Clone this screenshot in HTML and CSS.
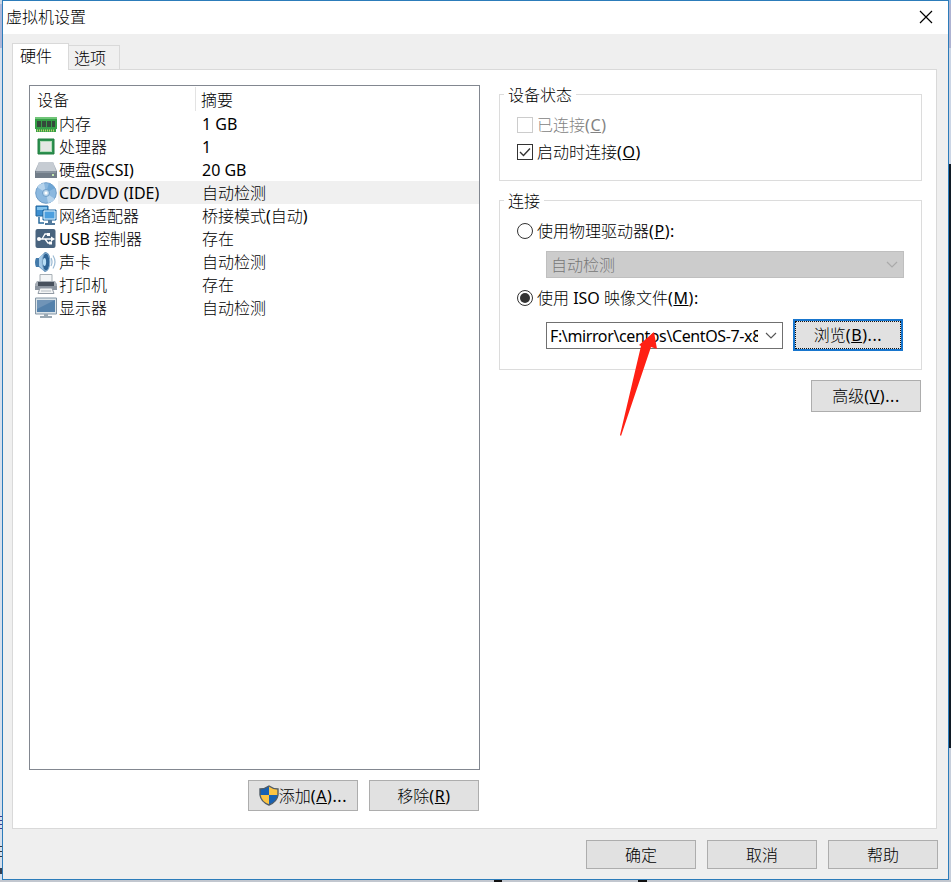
FILE: index.html
```html
<!DOCTYPE html>
<html lang="zh-CN">
<head>
<meta charset="utf-8">
<title>虚拟机设置</title>
<link rel="stylesheet" href="styles.css">
</head>
<body>
<div class="desktop">
<div class="edge edge-left"><i class="scrap s1"></i><i class="scrap s2"></i><i class="scrap s3"></i></div>
<main class="window">
  <header class="titlebar"><span>虚拟机设置</span>
    <svg class="close" width="14" height="14" viewBox="0 0 14 14"><path d="M1 1L13 13M13 1L1 13" stroke="#000" stroke-width="1.2"/></svg>
  </header>
  <nav class="tabs"><div class="tab active">硬件</div><div class="tab">选项</div></nav>
  <section class="panel">
    <div class="left">
      <div class="list">
        <div class="row head"><span class="name">设备</span><span class="sum">摘要</span></div>
        <div class="row"><svg class="ico" viewBox="0 0 22 22"><path d="M0 4H22V16H21V19H1V16H0Z" fill="#35a047"/><path d="M0 4H22V6H0Z" fill="#70c578"/><path d="M2 8h4v6H2zM7 8h4v6H7zM12 8h4v6h-4zM17 8h3v6h-3z" fill="#344a3b"/><path d="M2 17.5H20" stroke="#bfcf71" stroke-width="2" stroke-dasharray="1 1"/></svg><span class="name">内存</span><span class="sum">1 GB</span></div>
        <div class="row"><svg class="ico" viewBox="0 0 22 22"><path d="M3 3H19V18H3Z" fill="#2c9250" stroke="#207c3f"/><path d="M5 5H17V16H5Z" fill="#b5dcbb"/><path d="M6 6H16V15H6Z" fill="#e4e8e4"/></svg><span class="name">处理器</span><span class="sum">1</span></div>
        <div class="row"><svg class="ico" viewBox="0 0 22 22"><path d="M4 3H18L22 12V19H0V12Z" fill="#a6afb9"/><path d="M4 3H18L21 12H1Z" fill="#c6ccd3"/><path d="M0 12H22V19H0Z" fill="#727d89"/><path d="M1 13H21" stroke="#a0abb5"/><path d="M17 15h2v2h-2z" fill="#c6eab1"/></svg><span class="name">硬盘(SCSI)</span><span class="sum">20 GB</span></div>
        <div class="row selected"><svg class="ico" viewBox="0 0 22 22"><circle cx="11" cy="11" r="10.3" fill="#8bb8df" stroke="#6e9cc7"/><path d="M11 11L2 5A11 11 0 0 1 9 1ZM11 11L20 17A11 11 0 0 1 13 21Z" fill="#b5d3ec"/><path d="M11 11L14 1A11 11 0 0 1 20 6Z" fill="#6ea5d4"/><circle cx="11" cy="11" r="3.5" fill="#bdd8ed" stroke="#6d9dc8"/><circle cx="11" cy="11" r="1.5" fill="#fff"/></svg><span class="name">CD/DVD (IDE)</span><span class="sum">自动检测</span></div>
        <div class="row"><svg class="ico" viewBox="0 0 22 22"><path d="M1 1H13V11H1Z" fill="#3d8fd0" stroke="#23659a"/><path d="M2 2H12V5H2Z" fill="#83c3ed"/><path d="M4 12V18H9" fill="none" stroke="#29699c" stroke-width="1.5"/><path d="M8 5H21V15H8Z" fill="#4b9fdf" stroke="#23659a"/><path d="M9 6H20V14H9Z" fill="none" stroke="#e3f3fc"/><path d="M13 15H17V18H20V20H10V18H13Z" fill="#527a9c"/></svg><span class="name">网络适配器</span><span class="sum">桥接模式(自动)</span></div>
        <div class="row"><svg class="ico" viewBox="0 0 22 22"><rect x=".5" y="1" width="20" height="19" rx="2" fill="#49647f"/><path d="M3 11H18M7 11L10 6H13M10 11L13 15H15" fill="none" stroke="#fff" stroke-width="1.3"/><circle cx="4" cy="11" r="2" fill="#fff"/><path d="M16 8.5L20 11L16 13.5ZM12 5h3v3h-3zM14 13.5h3v3h-3z" fill="#fff"/></svg><span class="name">USB 控制器</span><span class="sum">存在</span></div>
        <div class="row"><svg class="ico" viewBox="0 0 22 22"><path d="M1 7H4L10 1Q16 2 15 11T10 21L4 16H1Q-1 11 1 7Z" fill="#437aaa"/><path d="M4 7L9 2Q6 11 9 20L4 15Z" fill="#a4cae8"/><ellipse cx="11" cy="11" rx="3.8" ry="9" fill="#2f6495" stroke="#8eb3d1"/><ellipse cx="9.5" cy="11" rx="1.6" ry="4" fill="#b8ddf4"/><path d="M16 7Q18 11 16 15M18 4.5Q22 11 18 17.5" fill="none" stroke="#9bbad3" stroke-width="1.2"/></svg><span class="name">声卡</span><span class="sum">自动检测</span></div>
        <div class="row"><svg class="ico" viewBox="0 0 22 22"><path d="M5 .5H17V9H5Z" fill="#f3f5f6" stroke="#a7afb5"/><path d="M2 7H20L22 10V16H0V10Z" fill="#a6adb5"/><path d="M3 8H19V12H3Z" fill="#48515d"/><path d="M0 12H22V16H0Z" fill="#8b949f"/><path d="M5 14H17L19 19.5H3Z" fill="#f4f5f5" stroke="#929ba5"/><path d="M6 17H16" stroke="#b4bbc1"/></svg><span class="name">打印机</span><span class="sum">存在</span></div>
        <div class="row"><svg class="ico" viewBox="0 0 22 22"><path d="M.5 1H21.5V17H.5Z" fill="#dbe4e9" stroke="#8395a5"/><path d="M2 3H20V15H2Z" fill="#5481ab"/><path d="M2 3H20L2 12Z" fill="#7094b7"/><path d="M9 17H13V19H17V21H5V19H9Z" fill="#9aa8b3"/></svg><span class="name">显示器</span><span class="sum">自动检测</span></div>
      </div>
      <div class="actions">
        <div class="btn"><svg class="shield" viewBox="0 0 20 21"><path d="M10 1Q14 4 19 4V10Q18 17 10 20Q2 17 1 10V4Q6 4 10 1Z" fill="#fbc443"/><path d="M10 1Q6 4 1 4V10H10ZM10 10H19Q18 17 10 20Z" fill="#1761b3"/><path d="M10 1Q14 4 19 4V10Q18 17 10 20Q2 17 1 10V4Q6 4 10 1Z" fill="none" stroke="#515c66" stroke-width="1.4"/></svg><span>添加<b>(<u>A</u>)...</b></span></div>
        <div class="btn"><span>移除<b>(<u>R</u>)</b></span></div>
      </div>
    </div>
    <div class="right">
      <section class="group status"><h2>设备状态</h2>
        <div class="option disabled"><i class="check"></i><span>已连接<b>(<u>C</u>)</b></span></div>
        <div class="option second"><i class="check"><svg viewBox="0 0 14 14"><path d="M2 7L5.5 10.5L12 3.5" fill="none" stroke="#333" stroke-width="1.4"/></svg></i><span>启动时连接<b>(<u>O</u>)</b></span></div>
      </section>
      <section class="group connection"><h2>连接</h2>
        <div class="option"><i class="radio"></i><span>使用物理驱动器<b>(<u>P</u>):</b></span></div>
        <div class="combo off"><span>自动检测</span><svg class="chev" viewBox="0 0 12 8"><path d="M1 1L6 6L11 1" fill="none" stroke="#aaa" stroke-width="1.2"/></svg></div>
        <div class="option"><i class="radio on"></i><span>使用 ISO 映像文件<b>(<u>M</u>):</b></span></div>
        <div class="file"><div class="combo"><span>F:\mirror\centos\CentOS-7-x8</span><svg class="chev" viewBox="0 0 12 8"><path d="M1 1L6 6L11 1" fill="none" stroke="#555" stroke-width="1.1"/></svg>
          <svg class="arrow" viewBox="0 0 40 108"><path d="M34 2L37 19L31 17L1 106L0 105L21 16L19 15Z" fill="#ff2014"/></svg></div>
          <div class="btn focus"><span>浏览<b>(<u>B</u>)...</b></span></div></div>
      </section>
      <div class="btn advanced"><span>高级<b>(<u>V</u>)...</b></span></div>
    </div>
  </section>
  <footer><div class="btn">确定</div><div class="btn">取消</div><div class="btn">帮助</div></footer>
</main>
<div class="edge edge-right"></div>
<div class="bottom"></div>
</div>
</body>
</html>
```
FILE: styles.css
```css
* { box-sizing: border-box; }
body { margin: 0; overflow: hidden; font: 16px/22px "Noto Sans", "Noto Sans CJK SC Light", "Noto Sans CJK SC DemiLight", "Noto Sans CJK SC", sans-serif; color: #000; }
b { font-weight: inherit; letter-spacing: .6px; }
.desktop { display: grid; grid-template: 880px 2px / 2px 947px 2px; width: 951px; height: 882px; background: #c2c7cf; }
.window { display: flex; flex-direction: column; min-width: 0; background: #efefef; border: 1px solid #2c7cba; }
.edge-left { background: linear-gradient(#cbd6e5 0 4px, #aeb7d8 4px 48px, #d6dfec 48px); }
.edge-right { background: linear-gradient(#9db9df 0 4px, #aeb3d2 4px 48px, #cbd5e5 48px 164px, #101a25 164px 748px, #c6cedb 748px); }
.scrap { display: block; height: 16px; }
.s1 { margin-top: 816px; background: repeating-linear-gradient(#3b3d91 0 1px, #d6dfec 1px 4px); }
.s2 { margin-top: 14px; height: 12px; background: repeating-linear-gradient(#333a43 0 1px, #d6dfec 1px 5px); }
.s3 { margin-top: 10px; height: 6px; background: #354052; }
.bottom { grid-column: 1 / -1; background: linear-gradient(90deg, transparent 494px, #111 494px 502px, transparent 502px 638px, #111 638px 647px, transparent 647px); }
.titlebar { display: flex; flex: none; height: 33px; align-items: center; justify-content: space-between; padding: 0 15px 1px 3px; background: #fff; }
.close { display: block; }
.tabs { display: flex; flex: none; align-items: flex-end; height: 35px; padding-left: 9px; }
.tab { width: 51px; height: 24px; border: 1px solid #d9d9d9; border-width: 1px 1px 0 0; padding: 1px 0 0 5px; background: #f0f0f0; }
.tab.active { z-index: 1; width: 57px; height: 27px; margin-bottom: -1px; padding: 1px 0 0 7px; border-left-width: 1px; background: #fff; }
.panel { display: flex; flex: none; width: 925px; height: 760px; margin-left: 9px; padding: 15px 14px 0 16px; gap: 19px; border: 1px solid #d9d9d9; background: #fff; }
.left { width: 451px; }
.list { height: 685px; border: 1px solid #828790; }
.row { display: flex; align-items: center; height: 23px; padding-left: 5px; }
.row.head { height: 26px; padding-left: 7px; }
.ico { width: 22px; height: 22px; flex: none; margin-right: 2px; }
.name { width: 143px; white-space: nowrap; }
.head .name { width: 159px; height: 24px; padding-top: 2px; border-right: 1px solid #e3e3e3; }
.head .sum { padding-left: 5px; padding-top: 1px; }
.row.selected { background: linear-gradient(90deg, #fff 28px, #f0f0f0 28px); }
.actions { display: flex; justify-content: flex-end; gap: 11px; margin: 10px 1px 0 0; }
.btn { display: flex; align-items: center; justify-content: center; width: 110px; height: 31px; border: 1px solid #adadad; background: #e1e1e1; white-space: nowrap; }
.shield { width: 20px; height: 21px; }
.right { width: 423px; padding-top: 9px; }
.group { border: 1px solid #dcdcdc; padding-left: 17px; }
.group h2 { width: max-content; height: 22px; margin: -11px 0 0 -13px; padding: 0 4px; background: #fff; font: inherit; }
.status { height: 87px; }
.connection { height: 170px; margin-top: 19px; }
.option { display: flex; align-items: center; height: 22px; gap: 4px; }
.status .option { margin-top: 8px; }
.status .second { margin-top: 5px; }
.check { width: 16px; height: 16px; border: 1px solid #333; }
.check svg { display: block; }
.disabled { color: #838383; }
.disabled .check { border-color: #ccc; }
.connection .option { margin-top: 8px; }
.radio { display: flex; width: 16px; height: 16px; border: 1px solid #333; border-radius: 50%; align-items: center; justify-content: center; }
.radio.on::after { content: ""; width: 10px; height: 10px; border-radius: 50%; background: #333; }
.combo { display: flex; position: relative; width: 358px; height: 27px; margin: 9px 0 0 29px; align-items: center; justify-content: space-between; padding: 0 5px 0 3px; border: 1px solid #707070; }
.combo span { width: 208px; overflow: hidden; white-space: nowrap; }
.combo.off { border-color: #bfbfbf; background: #ccc; color: #777; padding-left: 4px; }
.chev { width: 12px; height: 8px; flex: none; }
.connection .combo + .option { margin-top: 9px; }
.file { display: flex; margin-top: 10px; gap: 10px; }
.file .combo { width: 237px; margin: 3px 0 0 29px; }
.file .combo span { letter-spacing: -.38px; }
.arrow { position: absolute; left: 73px; top: 7px; width: 40px; height: 108px; }
.focus { position: relative; height: 32px; border: 2px solid #1876ce; outline: 1px dotted #111; outline-offset: -3px; }
.advanced { height: 32px; margin: 10px 0 0 312px; }
footer { display: flex; gap: 11px; justify-content: flex-end; padding: 11px 10px 0 0; }
footer .btn { height: 29px; }
```
